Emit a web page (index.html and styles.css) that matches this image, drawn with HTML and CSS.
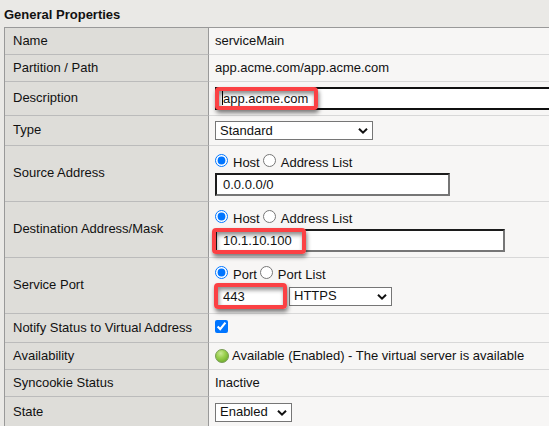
FILE: index.html
```html
<!DOCTYPE html>
<html lang="en">
<head>
<meta charset="utf-8">
<title>General Properties</title>
<link rel="stylesheet" href="styles.css">
</head>
<body>
<main class="panel">
  <h1 class="title">General Properties</h1>
  <table class="props">
    <tbody>
      <tr><th scope="row">Name</th><td>serviceMain</td></tr>
      <tr><th scope="row">Partition / Path</th><td>app.acme.com/app.acme.com</td></tr>
      <tr class="row-desc">
        <th scope="row"><label for="desc">Description</label></th>
        <td><div class="line mark mark-desc"><input class="text focused" id="desc" type="text" value="app.acme.com"><span class="caret"></span></div></td>
      </tr>
      <tr class="row-type">
        <th scope="row"><label for="type">Type</label></th>
        <td><div class="pick pick-type"><select id="type"><option>Standard</option></select><svg class="chev" viewBox="0 0 10 8"><path d="M1 1.7L5 5.7L9 1.7"/></svg></div></td>
      </tr>
      <tr class="row-double">
        <th scope="row"><label for="source">Source Address</label></th>
        <td>
          <div class="radios"><input type="radio" name="src" id="src-host" checked><label for="src-host">Host</label><input type="radio" name="src" id="src-list"><label for="src-list">Address List</label></div>
          <div class="line"><input class="text source" id="source" type="text" value="0.0.0.0/0"></div>
        </td>
      </tr>
      <tr class="row-double">
        <th scope="row"><label for="dest">Destination Address/Mask</label></th>
        <td>
          <div class="radios"><input type="radio" name="dst" id="dst-host" checked><label for="dst-host">Host</label><input type="radio" name="dst" id="dst-list"><label for="dst-list">Address List</label></div>
          <div class="line mark mark-dest"><input class="text dest" id="dest" type="text" value="10.1.10.100"></div>
        </td>
      </tr>
      <tr class="row-double">
        <th scope="row"><label for="port">Service Port</label></th>
        <td>
          <div class="radios"><input type="radio" name="prt" id="prt-port" checked><label for="prt-port">Port</label><input type="radio" name="prt" id="prt-list"><label for="prt-list">Port List</label></div>
          <div class="line mark mark-port"><input class="text port" id="port" type="text" value="443"><div class="pick pick-port"><select aria-label="Service"><option>HTTPS</option></select><svg class="chev" viewBox="0 0 10 8"><path d="M1 1.7L5 5.7L9 1.7"/></svg></div></div>
        </td>
      </tr>
      <tr class="row-notify">
        <th scope="row"><label for="notify">Notify Status to Virtual Address</label></th>
        <td><input type="checkbox" id="notify" checked></td>
      </tr>
      <tr>
        <th scope="row">Availability</th>
        <td><div class="status"><svg class="orb" viewBox="0 0 14 14"><defs><radialGradient id="g" cx=".4" cy=".3" r=".75"><stop offset="0" stop-color="#c9e896"/><stop offset=".45" stop-color="#9bd04f"/><stop offset="1" stop-color="#6cab2a"/></radialGradient></defs><circle cx="7" cy="7" r="6.5" fill="url(#g)" stroke="#7a9c58"/></svg><span>Available (Enabled) - The virtual server is available</span></div></td>
      </tr>
      <tr><th scope="row">Syncookie Status</th><td>Inactive</td></tr>
      <tr class="row-state">
        <th scope="row"><label for="state">State</label></th>
        <td><div class="pick pick-state"><select id="state"><option>Enabled</option></select><svg class="chev" viewBox="0 0 10 8"><path d="M1 1.7L5 5.7L9 1.7"/></svg></div></td>
      </tr>
    </tbody>
  </table>
</main>
</body>
</html>
```
FILE: styles.css
```css
*, *::after { box-sizing: border-box; }
body {
  margin: 0;
  overflow: hidden;
  background: #eae9e6;
  color: #111;
  font: 13px/16px "Liberation Sans", Arial, sans-serif;
}
.panel { margin: 0 -16px 0 4px; padding-top: 7px; }
.title { margin: 0; height: 20px; font-size: 13px; line-height: 16px; }
.props {
  width: 100%;
  border-collapse: separate;
  border-spacing: 0;
  border-top: 1px solid #999;
  border-left: 1px solid #999;
  table-layout: fixed;
}
th, td { height: 27px; padding: 0 0 0 6px; text-align: left; vertical-align: middle; }
th {
  width: 204px;
  padding-left: 8px;
  background: #deddd9;
  border-right: 1px solid #999;
  border-bottom: 1px solid #bbb;
  font-weight: normal;
  white-space: nowrap;
}
td { background: #f7f6f5; border-bottom: 1px solid #d8d8d8; }
.row-desc > * { height: 34px; }
.row-type > * { height: 30px; }
.row-double > * { height: 56px; }
.row-desc th, .row-type th, .row-double th { padding-bottom: 2px; }
.row-notify > * { height: 29px; }
.row-state > * { height: 31px; }

input, select { margin: 0; color: #111; font: inherit; }
.text {
  display: block;
  height: 23px;
  padding: 0 6px;
  border: 2px solid;
  border-color: #1c1c1c #767676 #767676 #1c1c1c;
  border-radius: 0;
  background: #fff;
  outline: 0;
}
.focused { width: 100%; border-color: #101010; }
.source { width: 235px; }
.dest { width: 290px; }
.port { width: 71px; }
.caret { position: absolute; top: 4px; left: 7px; width: 1px; height: 14px; background: #000; }

.line { position: relative; display: flex; align-items: center; gap: 3px; }
.mark::after {
  content: "";
  position: absolute;
  border: 4px solid #fb4144;
  border-radius: 4px;
  box-shadow: 1px 3px 4px rgba(0, 0, 0, .5), inset 1px 3px 4px rgba(0, 0, 0, .45);
  pointer-events: none;
}
.mark-desc::after { top: 0; left: 0; width: 103px; height: 23px; }
.mark-dest::after { top: -1px; left: -3px; width: 94px; height: 26px; }
.mark-port::after { top: -2px; left: -1px; width: 73px; height: 26px; }

.radios { display: flex; align-items: flex-start; height: 21px; padding-top: 2px; }
.radios input { width: 13px; height: 13px; }
.radios label { margin: 1px 3px 0 5px; }

.pick { position: relative; height: 19px; }
.pick select {
  display: block;
  width: 100%;
  height: 100%;
  padding: 0 4px;
  appearance: none;
  border: 1px solid #767676;
  border-radius: 0;
  background: #fff;
}
.pick-type { width: 158px; }
.pick-port { width: 103px; }
.pick-state { width: 77px; }
.chev { position: absolute; top: 6px; right: 5px; width: 10px; height: 8px; pointer-events: none; }
.chev path { fill: none; stroke: #111; stroke-width: 2; }

#notify { display: block; width: 13px; height: 13px; margin-bottom: 4px; }
.status { display: flex; align-items: center; gap: 3px; }
.orb { width: 14px; height: 14px; }
```
